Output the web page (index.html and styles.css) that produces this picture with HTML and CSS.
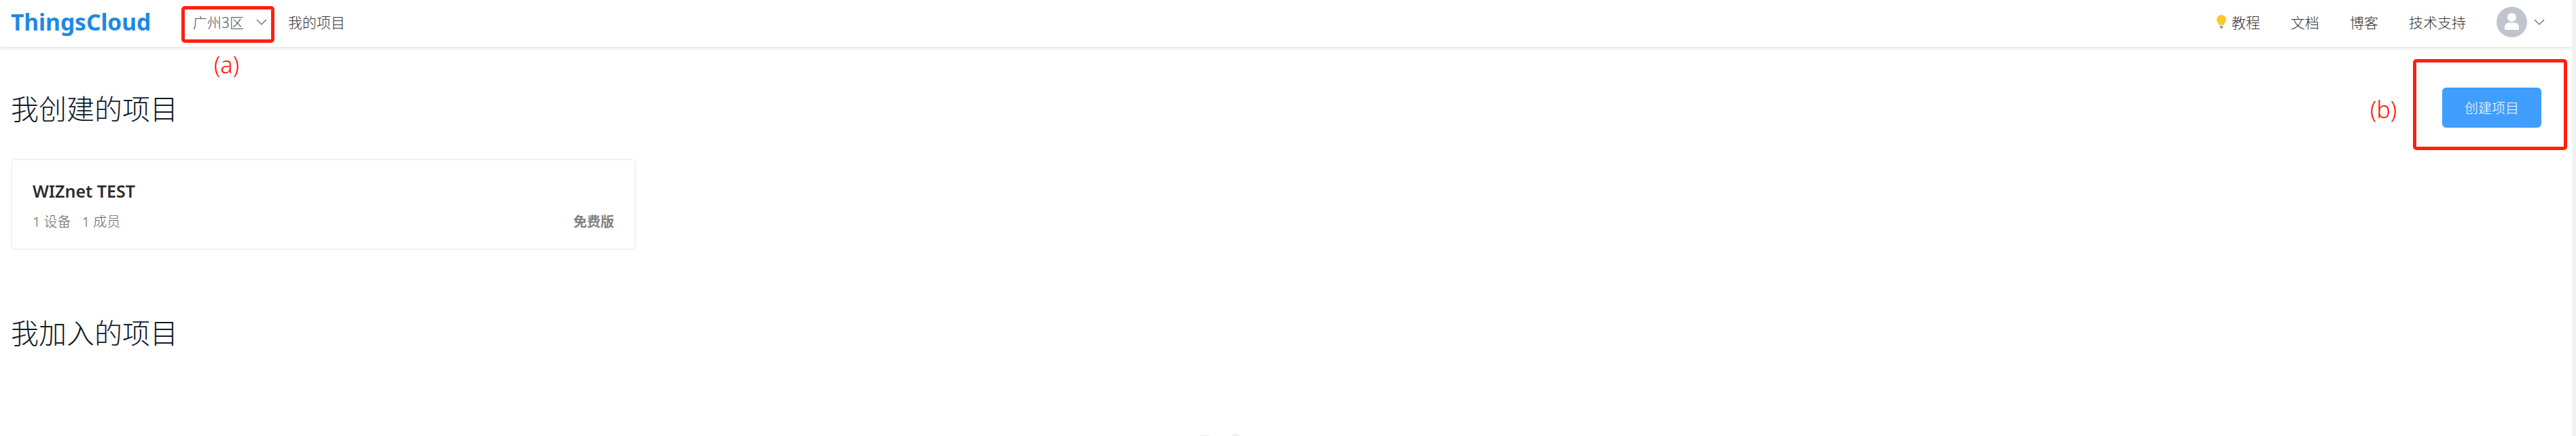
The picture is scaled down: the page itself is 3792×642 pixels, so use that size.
FILE: index.html
```html
<!DOCTYPE html>
<html lang="zh">
<head>
<meta charset="utf-8">
<title>ThingsCloud</title>
<link rel="stylesheet" href="styles.css">
</head>
<body>
<div class="app">
  <header class="topbar">
    <div class="topbar-left">
      <a class="logo">ThingsCloud</a>
      <a class="region">广州3区
        <svg class="chev" viewBox="0 0 16 9"><path d="M1 1l7 7 7-7"/></svg>
      </a>
      <a class="nav-item">我的项目</a>
    </div>
    <div class="topbar-right">
      <a class="nav-item tutorial">
        <svg class="bulb" viewBox="0 0 14 20"><path class="bulb-glass" d="M7 0a7 7 0 0 0-7 7c0 2.600 1.300 4 2.600 5.600.7.900 1 1.600 1 2.400h6.800c0-.8.300-1.500 1-2.400C12.700 11 14 9.600 14 7a7 7 0 0 0-7-7z"/><path class="bulb-base" d="M4.500 16h5v2l-1.500 2H6l-1.500-2z"/></svg>
        教程</a>
      <a class="nav-item">文档</a>
      <a class="nav-item">博客</a>
      <a class="nav-item">技术支持</a>
      <div class="user">
        <svg class="avatar" viewBox="0 0 45 45"><circle class="avatar-bg" cx="22.500" cy="22.500" r="22.500"/><circle class="avatar-fg" cx="22.500" cy="15.500" r="6.500"/><path class="avatar-fg" d="M12 33v-4c0-3 3-5.500 6-5.500h9c3 0 6 2.500 6 5.500v4c0 .6-.4 1-1 1H13c-.6 0-1-.4-1-1z"/></svg>
        <svg class="chev" viewBox="0 0 16 9"><path d="M1 1l7 7 7-7"/></svg>
      </div>
    </div>
  </header>
  <main class="content">
    <section class="created">
      <div class="section-head">
        <h2 class="section-title">我创建的项目</h2>
        <button class="create-btn">创建项目</button>
      </div>
      <article class="card">
        <h3 class="card-title">WIZnet TEST</h3>
        <div class="card-meta">
          <div class="card-stats"><span>1 设备</span><span>1 成员</span></div>
          <span class="plan">免费版</span>
        </div>
      </article>
    </section>
    <section class="joined">
      <h2 class="section-title">我加入的项目</h2>
    </section>
  </main>
</div>
<div class="scroll-track"></div>
<div class="mark mark-a"></div>
<div class="mark mark-b"></div>
<span class="mark-label label-a">(a)</span>
<span class="mark-label label-b">(b)</span>
<svg class="empty-hint" viewBox="0 0 64 4"><ellipse cx="8" cy="4" rx="8" ry="1.500"/><ellipse cx="54" cy="4" rx="6" ry="3"/></svg>
</body>
</html>
```
FILE: styles.css
```css
* { box-sizing: border-box; }
html, body { margin: 0; height: 100%; }
body {
  position: relative;
  display: flex;
  overflow: hidden;
  background: #fff;
  font-family: "Noto Sans", "Noto Sans CJK SC", sans-serif;
}
.app { width: 3786px; flex: none; }
.scroll-track { flex: 1; background: #f1f1f1; }
.topbar {
  height: 69px;
  display: flex;
  align-items: center;
  justify-content: space-between;
  padding: 0 40px 5px 16px;
  background: #fff;
  box-shadow: 0 2px 6px rgba(0, 0, 0, .12);
}
.topbar-left, .topbar-right { display: flex; align-items: center; }
.logo {
  width: 268px;
  font-size: 33.500px;
  font-weight: 700;
  color: #1e88e5;
  line-height: 64px;
}
.region {
  display: flex;
  align-items: center;
  gap: 18px;
  width: 140px;
  font-size: 21px;
  font-weight: 300;
  color: #4c4e52;
}
.nav-item { font-size: 21px; font-weight: 300; color: #333; white-space: nowrap; }
.topbar-right { gap: 45px; }
.tutorial { display: flex; align-items: center; gap: 8px; }
.bulb { width: 14px; height: 20px; margin-left: 1px; }
.bulb-glass { fill: #ffca28; }
.bulb-base { fill: #9e9e9e; }
.user { display: flex; align-items: center; gap: 10px; }
.avatar { width: 45px; height: 45px; }
.avatar-bg { fill: #c0c4cc; }
.avatar-fg { fill: #fff; }
.chev { width: 16px; height: 9px; flex: none; }
.chev path { fill: none; stroke: #606266; stroke-width: 1.200; }
.content { padding: 0 45px 0 16px; }
.section-head {
  display: flex;
  align-items: flex-start;
  justify-content: space-between;
  height: 165px;
  padding-top: 60px;
}
.section-title {
  margin: 7px 0 0;
  font-size: 41px;
  line-height: 48px;
  font-weight: 300;
  color: #0f1a26;
}
.joined .section-title { margin-top: 0; }
.create-btn {
  width: 146px;
  height: 59px;
  border: 0;
  border-radius: 6px;
  background: #409eff;
  color: #fff;
  font: inherit;
  font-size: 20px;
  font-weight: 300;
}
.card {
  width: 920px;
  height: 134px;
  padding: 29px 30px 0;
  border: 2px solid #f0f2f7;
  border-radius: 6px;
}
.card-title {
  margin: 0;
  font-size: 25px;
  line-height: 32px;
  font-weight: 600;
  color: #2c2c2c;
}
.card-meta {
  display: flex;
  justify-content: space-between;
  margin-top: 16px;
  font-size: 20px;
  line-height: 28px;
  font-weight: 300;
  color: #666;
}
.card-stats { display: flex; gap: 16px; }
.plan { font-weight: 700; color: #808080; }
.joined { margin-top: 98px; }
.mark { position: absolute; border: 5px solid #ff2010; border-radius: 5px; }
.mark-a { left: 267px; top: 9px; width: 137px; height: 54px; }
.mark-b { left: 3552px; top: 87px; width: 227px; height: 134px; }
.mark-label { position: absolute; font-size: 34px; line-height: 40px; font-weight: 300; color: #ff1000; }
.label-a { left: 315px; top: 75px; }
.label-b { left: 3489px; top: 141px; }
.empty-hint { position: absolute; left: 1765px; top: 638px; width: 64px; height: 4px; }
.empty-hint ellipse { fill: #eee; }
```
